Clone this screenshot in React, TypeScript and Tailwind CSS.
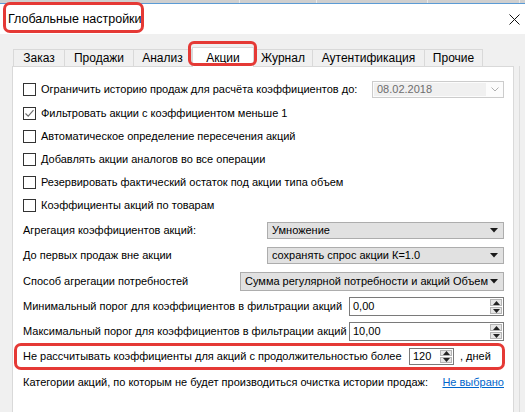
import React from "react";

const font = { fontFamily: '"Liberation Sans", Arial, sans-serif' };

const tabs = [
  { label: "Заказ", w: 51 },
  { label: "Продажи", w: 69 },
  { label: "Анализ", w: 58 },
  { label: "Акции", w: 62, active: true },
  { label: "Журнал", w: 59 },
  { label: "Аутентификация", w: 112 },
  { label: "Прочие", w: 58 },
];

const checks = [
  { label: "Фильтровать акции с коэффициентом меньше 1", checked: true },
  { label: "Автоматическое определение пересечения акций" },
  { label: "Добавлять акции аналогов во все операции" },
  { label: "Резервировать фактический остаток под акции типа объем" },
  { label: "Коэффициенты акций по товарам" },
];

function Checkbox({ checked }: { checked?: boolean }) {
  return (
    <span className="w-[13px] h-[13px] border border-[#333333] bg-white flex items-center justify-center shrink-0">
      {checked && (
        <svg width="11" height="11" viewBox="0 0 11 11">
          <path d="M1.5 5.5 L4.2 8.2 L9.5 2.2" fill="none" stroke="#6b6b6b" strokeWidth="1.1" />
        </svg>
      )}
    </span>
  );
}

function Combo({ value, w, h = 17 }: { value: string; w: number; h?: number }) {
  return (
    <div
      className="border border-[#adadad] bg-[#e1e1e1] flex items-center pl-[4px] pr-[5px] shrink-0"
      style={{ width: w, height: h }}
    >
      <span className="flex-1 whitespace-nowrap overflow-hidden">{value}</span>
      <svg width="8" height="5" viewBox="0 0 8 5" className="shrink-0">
        <path d="M0 0 H8 L4 4.5 Z" fill="#1a1a1a" />
      </svg>
    </div>
  );
}

function Spin({ value, w, h = 19 }: { value: string; w: number; h?: number }) {
  return (
    <div
      className="border border-[#7a7a7a] bg-white flex items-stretch shrink-0"
      style={{ width: w, height: h }}
    >
      <span className="flex-1 pl-[3px] flex items-center">{value}</span>
      <div className="w-[13px] flex flex-col gap-[1px] p-[1px] pl-0">
        <div className="flex-1 bg-[#e6e6e6] border border-[#b5b5b5] flex items-center justify-center">
          <svg width="7" height="4" viewBox="0 0 7 4">
            <path d="M0 4 H7 L3.5 0 Z" fill="#222" />
          </svg>
        </div>
        <div className="flex-1 bg-[#e6e6e6] border border-[#b5b5b5] flex items-center justify-center">
          <svg width="7" height="4" viewBox="0 0 7 4">
            <path d="M0 0 H7 L3.5 4 Z" fill="#222" />
          </svg>
        </div>
      </div>
    </div>
  );
}

export default function App() {
  return (
    <div
      className="w-[525px] h-[412px] bg-[#f0f0f0] overflow-hidden relative text-[11px] text-black whitespace-nowrap"
      style={font}
    >
      {/* background window strip */}
      <div className="h-[3px] bg-[#cfcfcf] flex">
        <div className="w-[240px] border-r border-[#e8e8e8]" />
        <div className="w-[77px] border-r border-[#e8e8e8]" />
        <div className="w-[111px] border-r border-[#e8e8e8]" />
        <div className="w-[92px] border-r border-[#e8e8e8]" />
      </div>
      <div className="h-[1px] bg-[#5b9bd5]" />

      {/* title bar */}
      <div className="h-[30px] bg-white flex items-center justify-between pl-[8px] pr-[5px]">
        <span className="text-[12.5px]">Глобальные настройки</span>
        <svg width="11" height="11" viewBox="0 0 11 11">
          <path d="M0.5 0.5 L10.5 10.5 M10.5 0.5 L0.5 10.5" stroke="#111" strokeWidth="1" />
        </svg>
      </div>

      {/* tabs */}
      <div className="pl-[13px] flex items-end h-[32px] text-[12px]">
        {tabs.map((t) =>
          t.active ? (
            <div
              key={t.label}
              className="h-[20px] -mb-px bg-white border border-[#d9d9d9] border-b-0 flex items-center justify-center relative z-10"
              style={{ width: t.w }}
            >
              {t.label}
            </div>
          ) : (
            <div
              key={t.label}
              className="h-[17px] border border-[#d9d9d9] border-b-0 -ml-px first:ml-0 flex items-center justify-center"
              style={{ width: t.w + 1 }}
            >
              {t.label}
            </div>
          )
        )}
      </div>

      {/* panel */}
      <div className="flex">
        <div className="ml-[12px] w-[502px] h-[360px] bg-white border border-[#d9d9d9] pl-[10px] pr-[9px] pt-[11px]">
          <div className="h-[22px] flex items-center">
            <Checkbox />
            <span className="ml-[5px] flex-1">
              Ограничить историю продаж для расчёта коэффициентов до:
            </span>
            <div className="w-[132px] h-[17px] border border-[#cccccc] bg-[#fcfcfc] flex items-center p-[1px]">
              <span className="w-[112px] h-full bg-[#f0f0f0] text-[#6d6d6d] pl-[3px] flex items-center">
                08.02.2018
              </span>
              <svg className="ml-[5px]" width="8" height="5" viewBox="0 0 8 5">
                <path d="M0.5 0.5 L4 4 L7.5 0.5" fill="none" stroke="#b0b0b0" strokeWidth="1" />
              </svg>
            </div>
          </div>
          <div className="mt-[2px]">
            {checks.map((c) => (
              <div key={c.label} className="h-[23px] flex items-center">
                <Checkbox checked={c.checked} />
                <span className="ml-[5px]">{c.label}</span>
              </div>
            ))}
          </div>

          <div className="mt-[1px] h-[25px] flex items-center justify-between">
            <span>Агрегация коэффициентов акций:</span>
            <Combo value="Умножение" w={237} />
          </div>
          <div className="h-[25px] flex items-center justify-between">
            <span>До первых продаж вне акции</span>
            <Combo value="сохранять спрос акции К=1.0" w={237} />
          </div>
          <div className="h-[26px] flex items-center justify-between">
            <span>Способ агрегации потребностей</span>
            <Combo value="Сумма регулярной потребности и акций Объем" w={264} h={19} />
          </div>
          <div className="h-[25px] flex items-center justify-between">
            <span>Минимальный порог для коэффициентов в фильтрации акций</span>
            <Spin value="0,00" w={155} />
          </div>
          <div className="h-[25px] flex items-center justify-between">
            <span>Максимальный порог для коэффициентов в фильтрации акций</span>
            <Spin value="10,00" w={155} />
          </div>
          <div className="h-[25px] flex items-center">
            <span className="flex-1">
              Не рассчитывать коэффициенты для акций с продолжительностью более
            </span>
            <Spin value="120" w={45} h={17} />
            <span className="w-[44px] ml-[6px]">, дней</span>
          </div>
          <div className="h-[26px] flex items-center justify-between">
            <span>Категории акций, по которым не будет производиться очистка истории продаж:</span>
            <span className="text-[#0066cc] underline">Не выбрано</span>
          </div>
        </div>
        <div className="ml-[5px] w-px h-[360px] bg-[#dcdcdc]" />
      </div>

      {/* annotation boxes */}
      <div className="absolute left-[3px] top-[2px] w-[141px] h-[31px] border-[3px] border-[#e53935] rounded-[7px] pointer-events-none" />
      <div className="absolute left-[188px] top-[41px] w-[69px] h-[25px] border-[3px] border-[#e53935] rounded-[6px] pointer-events-none z-20" />
      <div className="absolute left-[14px] top-[343px] w-[491px] h-[27px] border-[3px] border-[#e53935] rounded-[7px] pointer-events-none" />
    </div>
  );
}
